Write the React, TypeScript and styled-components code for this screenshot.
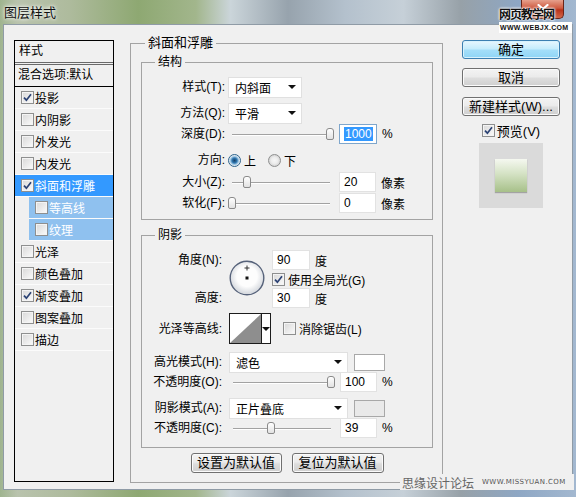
import styled, { createGlobalStyle } from "styled-components";

const GlobalStyle = createGlobalStyle`
  html, body {
    margin: 0;
    padding: 0;
  }
  body {
    font-family: "Liberation Sans", "Noto Sans CJK SC", sans-serif;
    font-size: 12px;
    color: #000;
  }
`;

const Window = styled.div`
  position: relative;
  width: 576px;
  height: 497px;
  overflow: hidden;
  display: flex;
  flex-direction: column;
  background: linear-gradient(
    90deg,
    #9fb48f 0%,
    #b9c3ad 3%,
    #aebb9d 12%,
    #8ea872 24%,
    #a2b68c 34%,
    #cbd5da 40%,
    #97a3ad 50%,
    #b4c1cd 60%,
    #c6d0d8 70%,
    #97a1a8 80%,
    #8ea7c4 90%,
    #a3b8d0 100%
  );
`;

const TitleBar = styled.div`
  height: 24px;
  display: flex;
  align-items: flex-start;
  flex: none;
`;

const Title = styled.div`
  font-family: "Noto Sans CJK SC", sans-serif;
  font-size: 13px;
  line-height: 24px;
  padding-left: 4px;
  color: #111;
  text-shadow: 0 0 5px #fff, 0 0 3px #fff;
`;

const CloseButton = styled.div`
  margin-left: auto;
  margin-right: 12px;
  width: 43px;
  height: 19px;
  box-sizing: border-box;
  border: 1px solid #6a2418;
  border-top: none;
  border-radius: 0 0 5px 5px;
  background: linear-gradient(#e6a08c, #cf5a40 45%, #b8321a 55%, #d4684a);
  display: flex;
  align-items: center;
  justify-content: center;
`;

const Body = styled.div`
  flex: 1;
  margin: 0 3px 7px 3px;
  background: #f0f0f0;
  border: 1px solid #8f9ba6;
  display: flex;
  align-items: flex-start;
  padding: 15px 0 0 10px;
`;

const StyleList = styled.div`
  width: 100px;
  height: 442px;
  box-sizing: border-box;
  border: 1px solid #000;
  display: flex;
  flex-direction: column;
  flex: none;
`;

const ListHeader = styled.div`
  height: 21px;
  line-height: 21px;
  padding-left: 4px;
  border-bottom: 3px double #6a6a6a;
`;

const BlendRow = styled.div`
  height: 21px;
  line-height: 21px;
  padding-left: 3px;
  border-bottom: 1px solid #000;
  white-space: nowrap;
`;

const ListRow = styled.div<{ $selected?: boolean; $sub?: boolean }>`
  height: 21px;
  display: flex;
  align-items: center;
  gap: 1px;
  padding-left: 6px;
  margin-left: ${(p) => (p.$sub ? 14 : 0)}px;
  border-bottom: 1px solid #fbfbfb;
  background: ${(p) => (p.$selected ? "#3399ff" : p.$sub ? "#8fc1ef" : "transparent")};
  color: ${(p) => (p.$selected || p.$sub ? "#fff" : "#000")};
  white-space: nowrap;
`;

const CheckBox = styled.span`
  width: 13px;
  height: 13px;
  box-sizing: border-box;
  border: 1px solid #8e8f8f;
  background: linear-gradient(135deg, #d8d8d8, #fbfbfb);
  box-shadow: inset 0 0 0 1px #f4f4f4;
  display: inline-flex;
  align-items: center;
  justify-content: center;
  flex: none;
`;

const OuterGroup = styled.div`
  width: 313px;
  margin: 3px 0 0 16px;
  box-sizing: border-box;
  border: 1px solid #a3a3a3;
  padding: 0 9px 9px 10px;
  display: flex;
  flex-direction: column;
  flex: none;
`;

const InnerGroup = styled.div<{ $mt: number; $pb: number }>`
  margin-top: ${(p) => p.$mt}px;
  padding-bottom: ${(p) => p.$pb}px;
  border: 1px solid #a3a3a3;
  display: flex;
  flex-direction: column;
`;

const GroupTitle = styled.div<{ $size?: number; $indent: number }>`
  align-self: flex-start;
  margin: -9px 0 0 ${(p) => p.$indent}px;
  padding: 0 3px;
  height: 16px;
  line-height: 16px;
  font-size: ${(p) => p.$size ?? 12}px;
  background: #f0f0f0;
`;

const Row = styled.div<{ $mt?: number; $h?: number; $ml?: number }>`
  display: flex;
  align-items: center;
  height: ${(p) => p.$h ?? 20}px;
  margin-top: ${(p) => p.$mt ?? 0}px;
  margin-left: ${(p) => p.$ml ?? 0}px;
  white-space: nowrap;
`;

const Label = styled.div<{ $w: number; $gap: number }>`
  width: ${(p) => p.$w}px;
  margin-right: ${(p) => p.$gap}px;
  text-align: right;
  line-height: 20px;
  white-space: nowrap;
  flex: none;
`;

const Select = styled.div<{ $w: number }>`
  width: ${(p) => p.$w}px;
  height: 21px;
  box-sizing: border-box;
  background: #fff;
  border: 1px solid #e0e0e0;
  padding: 0 5px 0 6px;
  display: flex;
  align-items: center;
  justify-content: space-between;
  flex: none;
`;

const DropArrow = styled.span`
  width: 0;
  height: 0;
  border-left: 4px solid transparent;
  border-right: 4px solid transparent;
  border-top: 4px solid #111;
`;

const Slider = styled.div`
  position: relative;
  width: 106px;
  height: 16px;
  flex: none;
  &::before {
    content: "";
    position: absolute;
    left: 4px;
    right: 4px;
    top: 8px;
    height: 1px;
    background: #a2a2a2;
    box-shadow: 0 1px 0 #fff;
  }
`;

const Thumb = styled.div`
  position: absolute;
  top: 2px;
  width: 8px;
  height: 12px;
  margin-left: -4px;
  box-sizing: border-box;
  border: 1px solid #8a8a8a;
  border-radius: 3px 3px 2px 2px;
  background: linear-gradient(#ffffff, #e2e2e2);
`;

const NumBox = styled.div<{ $w: number; $ml?: number; $focus?: boolean }>`
  width: ${(p) => p.$w}px;
  height: 20px;
  margin-left: ${(p) => p.$ml ?? 0}px;
  box-sizing: border-box;
  background: #fff;
  border: 1px solid ${(p) => (p.$focus ? "#7ea6cc" : "#e2e2e2")};
  padding-left: 4px;
  display: flex;
  align-items: center;
  flex: none;
`;

const Selection = styled.span`
  background: #3399ff;
  color: #fff;
  padding: 0 1px;
`;

const Unit = styled.span`
  margin-left: 5px;
`;

const RadioOption = styled.div<{ $mr?: number }>`
  display: flex;
  align-items: center;
  gap: 3px;
  margin-right: ${(p) => p.$mr ?? 0}px;
`;

const RadioDot = styled.span<{ $on?: boolean }>`
  width: 13px;
  height: 13px;
  border-radius: 50%;
  box-sizing: border-box;
  border: 1px solid ${(p) => (p.$on ? "#2c628b" : "#8e8f8f")};
  background: ${(p) =>
    p.$on
      ? "radial-gradient(circle, #173f66 0, #2f77b0 2.5px, #9cc4e2 4px, #f4f4f4 5.5px)"
      : "radial-gradient(circle, #f6f6f6 0, #eeeeee 3px, #d2d2d2 6px)"};
  flex: none;
`;

const AngleBlock = styled.div`
  display: flex;
  align-items: flex-start;
  height: 58px;
  margin-top: 7px;
`;

const LabelStack = styled.div`
  height: 58px;
  display: flex;
  flex-direction: column;
  justify-content: space-between;
`;

const Dial = styled.svg`
  margin-top: 10px;
  flex: none;
`;

const AngleControls = styled.div`
  margin-left: 7px;
  display: flex;
  flex-direction: column;
`;

const CheckText = styled.span<{ $ml?: number }>`
  margin-left: ${(p) => p.$ml ?? 3}px;
`;

const ContourPicker = styled.div`
  width: 42px;
  height: 31px;
  box-sizing: border-box;
  border: 1px solid #1c1c1c;
  background: #fff;
  display: flex;
  flex: none;
`;

const ContourSwatch = styled.svg`
  border-right: 1px solid #1c1c1c;
  flex: none;
`;

const ContourArrow = styled.div`
  flex: 1;
  display: flex;
  align-items: center;
  justify-content: center;
`;

const ColorSwatch = styled.div<{ $color: string }>`
  width: 31px;
  height: 17px;
  margin-left: 6px;
  box-sizing: border-box;
  border: 1px solid #a8a8a8;
  background: ${(p) => p.$color};
  flex: none;
`;

const ButtonRow = styled.div`
  margin-top: 5px;
  display: flex;
  justify-content: center;
  gap: 10px;
`;

const PushButton = styled.button<{ $w: number; $primary?: boolean }>`
  width: ${(p) => p.$w}px;
  height: 20px;
  box-sizing: border-box;
  padding: 0;
  font-family: "Liberation Sans", "Noto Sans CJK SC", sans-serif;
  font-size: 13px;
  line-height: 18px;
  color: #000;
  border-radius: 3px;
  border: 1px solid ${(p) => (p.$primary ? "#3c7fb1" : "#707070")};
  background: ${(p) =>
    p.$primary
      ? "linear-gradient(#e8f7fe, #c6ecfc 45%, #a3def9 55%, #8fd5f6)"
      : "linear-gradient(#f3f3f3, #ebebeb 45%, #dddddd 55%, #cfcfcf)"};
  box-shadow: inset 0 0 0 1px ${(p) => (p.$primary ? "#d8f2fd" : "#fbfbfb")};
  white-space: nowrap;
`;

const SideColumn = styled.div`
  width: 98px;
  margin-left: 19px;
  display: flex;
  flex-direction: column;
  align-items: center;
  flex: none;
`;

const SideButton = styled(PushButton)<{ $mt: number }>`
  height: 19px;
  line-height: 17px;
  margin-top: ${(p) => p.$mt}px;
`;

const PreviewToggle = styled.div`
  height: 16px;
  margin-top: 6px;
  display: flex;
  align-items: center;
  font-size: 13px;
`;

const PreviewBox = styled.div`
  width: 64px;
  height: 65px;
  margin-top: 5px;
  background: #dadada;
  display: flex;
  align-items: center;
  justify-content: center;
`;

const PreviewSquare = styled.div`
  width: 32px;
  height: 33px;
  background: linear-gradient(#f5f8f0, #d4e2c4 45%, #a7c089);
  box-shadow: 0 1px 1px rgba(0, 0, 0, 0.25);
`;

const TopMark = styled.div`
  position: absolute;
  left: 499px;
  top: 6px;
  display: flex;
  flex-direction: column;
  align-items: flex-start;
`;

const TopMarkTitle = styled.span`
  font-family: "Noto Sans CJK SC", sans-serif;
  font-size: 12px;
  font-weight: bold;
  line-height: 15px;
  letter-spacing: -1px;
  color: #111;
  text-shadow: 0 0 2px #fff, 0 0 2px #fff, 0 0 3px #fff;
`;

const TopMarkUrl = styled.span`
  margin-top: 1px;
  padding: 1px 4px 1px 1px;
  background: #fff;
  font-family: "Liberation Sans", sans-serif;
  font-size: 7px;
  font-weight: bold;
  line-height: 9px;
  letter-spacing: 0.3px;
  color: #111;
`;

const BottomMark = styled.div`
  position: absolute;
  left: 400px;
  top: 474px;
  width: 172px;
  height: 16px;
  background: #f0f0f0;
  display: flex;
  align-items: center;
  gap: 8px;
  padding-left: 2px;
  color: #666;
`;

const BottomMarkName = styled.span`
  font-family: "Noto Sans CJK SC", sans-serif;
  font-size: 12px;
`;

const BottomMarkUrl = styled.span`
  font-family: "DejaVu Sans", sans-serif;
  font-size: 7px;
  letter-spacing: 0.4px;
  color: #555;
`;

type StyleItem = { name: string; checked?: boolean; selected?: boolean; sub?: boolean };

const styleItems: StyleItem[] = [
  { name: "投影", checked: true },
  { name: "内阴影" },
  { name: "外发光" },
  { name: "内发光" },
  { name: "斜面和浮雕", checked: true, selected: true },
  { name: "等高线", sub: true },
  { name: "纹理", sub: true },
  { name: "光泽" },
  { name: "颜色叠加" },
  { name: "渐变叠加", checked: true },
  { name: "图案叠加" },
  { name: "描边" },
];

const Check = ({ on }: { on?: boolean }) => (
  <CheckBox>
    {on && (
      <svg width="9" height="9" viewBox="0 0 9 9">
        <path d="M1 4.6 L3.4 7.2 L8 1.2" fill="none" stroke="#2b4274" strokeWidth="1.7" />
      </svg>
    )}
  </CheckBox>
);

const Range = ({ pos }: { pos: number }) => (
  <Slider>
    <Thumb style={{ left: `${4 + pos * 98}px` }} />
  </Slider>
);

const App = () => {
  return (
    <>
      <GlobalStyle />
      <Window>
        <TitleBar>
          <Title>图层样式</Title>
          <CloseButton>
            <svg width="12" height="10" viewBox="0 0 12 10">
              <path d="M1.5 1 L10.5 9 M10.5 1 L1.5 9" stroke="#fff" strokeWidth="2.2" strokeLinecap="round" />
            </svg>
          </CloseButton>
        </TitleBar>
        <Body>
          <StyleList>
            <ListHeader>样式</ListHeader>
            <BlendRow>混合选项:默认</BlendRow>
            {styleItems.map((item) => (
              <ListRow key={item.name} $selected={item.selected} $sub={item.sub}>
                <Check on={item.checked} />
                <span>{item.name}</span>
              </ListRow>
            ))}
          </StyleList>

          <OuterGroup>
            <GroupTitle $size={13} $indent={4}>
              斜面和浮雕
            </GroupTitle>

            <InnerGroup $mt={11} $pb={6}>
              <GroupTitle $indent={13}>结构</GroupTitle>
              <Row $mt={7}>
                <Label $w={83} $gap={3}>样式(T):</Label>
                <Select $w={74}>
                  内斜面
                  <DropArrow />
                </Select>
              </Row>
              <Row $mt={6}>
                <Label $w={83} $gap={3}>方法(Q):</Label>
                <Select $w={74}>
                  平滑
                  <DropArrow />
                </Select>
              </Row>
              <Row $mt={1}>
                <Label $w={83} $gap={3}>深度(D):</Label>
                <Range pos={1} />
                <NumBox $w={38} $ml={5} $focus>
                  <Selection>1000</Selection>
                </NumBox>
                <Unit>%</Unit>
              </Row>
              <Row $mt={6}>
                <Label $w={83} $gap={3}>方向:</Label>
                <RadioOption $mr={12}>
                  <RadioDot $on />
                  <span>上</span>
                </RadioOption>
                <RadioOption>
                  <RadioDot />
                  <span>下</span>
                </RadioOption>
              </Row>
              <Row $mt={2}>
                <Label $w={83} $gap={3}>大小(Z):</Label>
                <Range pos={0.15} />
                <NumBox $w={37} $ml={5}>20</NumBox>
                <Unit>像素</Unit>
              </Row>
              <Row $mt={1}>
                <Label $w={83} $gap={3}>软化(F):</Label>
                <Range pos={0} />
                <NumBox $w={37} $ml={5}>0</NumBox>
                <Unit>像素</Unit>
              </Row>
            </InnerGroup>

            <InnerGroup $mt={15} $pb={9}>
              <GroupTitle $indent={13}>阴影</GroupTitle>
              <AngleBlock>
                <LabelStack>
                  <Label $w={80} $gap={7}>角度(N):</Label>
                  <Label $w={80} $gap={7}>高度:</Label>
                </LabelStack>
                <Dial width="36" height="36" viewBox="0 0 36 36">
                  <defs>
                    <radialGradient id="dialFill" cx="50%" cy="45%" r="55%">
                      <stop offset="0.55" stopColor="#fdfdfd" />
                      <stop offset="1" stopColor="#d0d4da" />
                    </radialGradient>
                  </defs>
                  <circle cx="18" cy="18" r="16.8" fill="url(#dialFill)" stroke="#56627a" strokeWidth="1.4" />
                  <path d="M18 5.5 V10.5 M15.5 8 H20.5" stroke="#333" strokeWidth="1" />
                  <rect x="16.5" y="16.5" width="3" height="3" fill="#111" />
                </Dial>
                <AngleControls>
                  <Row>
                    <NumBox $w={38}>90</NumBox>
                    <Unit>度</Unit>
                  </Row>
                  <Row $h={18}>
                    <Check on />
                    <CheckText>使用全局光(G)</CheckText>
                  </Row>
                  <Row>
                    <NumBox $w={38}>30</NumBox>
                    <Unit>度</Unit>
                  </Row>
                </AngleControls>
              </AngleBlock>
              <Row $mt={5} $h={31}>
                <Label $w={80} $gap={7}>光泽等高线:</Label>
                <ContourPicker>
                  <ContourSwatch width="31" height="29" viewBox="0 0 31 29">
                    <rect x="0" y="0" width="31" height="29" fill="#fff" />
                    <polygon points="0,29 31,0 31,29" fill="#8e8e8e" />
                  </ContourSwatch>
                  <ContourArrow>
                    <DropArrow />
                  </ContourArrow>
                </ContourPicker>
                <Row $ml={12}>
                  <Check />
                  <CheckText>消除锯齿(L)</CheckText>
                </Row>
              </Row>
              <Row $mt={8}>
                <Label $w={80} $gap={7}>高光模式(H):</Label>
                <Select $w={119}>
                  滤色
                  <DropArrow />
                </Select>
                <ColorSwatch $color="#ffffff" />
              </Row>
              <Row>
                <Label $w={80} $gap={7}>不透明度(O):</Label>
                <Range pos={1} />
                <NumBox $w={37} $ml={5}>100</NumBox>
                <Unit>%</Unit>
              </Row>
              <Row $mt={6}>
                <Label $w={80} $gap={7}>阴影模式(A):</Label>
                <Select $w={119}>
                  正片叠底
                  <DropArrow />
                </Select>
                <ColorSwatch $color="#e9e9e9" />
              </Row>
              <Row>
                <Label $w={80} $gap={7}>不透明度(C):</Label>
                <Range pos={0.39} />
                <NumBox $w={37} $ml={5}>39</NumBox>
                <Unit>%</Unit>
              </Row>
            </InnerGroup>

            <ButtonRow>
              <PushButton $w={91}>设置为默认值</PushButton>
              <PushButton $w={92}>复位为默认值</PushButton>
            </ButtonRow>
          </OuterGroup>

          <SideColumn>
            <SideButton $w={98} $mt={0} $primary>
              确定
            </SideButton>
            <SideButton $w={98} $mt={9}>
              取消
            </SideButton>
            <SideButton $w={98} $mt={10}>
              新建样式(W)...
            </SideButton>
            <PreviewToggle>
              <Check on />
              <CheckText $ml={2}>预览(V)</CheckText>
            </PreviewToggle>
            <PreviewBox>
              <PreviewSquare />
            </PreviewBox>
          </SideColumn>
        </Body>

        <TopMark>
          <TopMarkTitle>网页教学网</TopMarkTitle>
          <TopMarkUrl>WWW.WEBJX.COM</TopMarkUrl>
        </TopMark>
        <BottomMark>
          <BottomMarkName>思缘设计论坛</BottomMarkName>
          <BottomMarkUrl>WWW.MISSYUAN.COM</BottomMarkUrl>
        </BottomMark>
      </Window>
    </>
  );
};

export default App;
